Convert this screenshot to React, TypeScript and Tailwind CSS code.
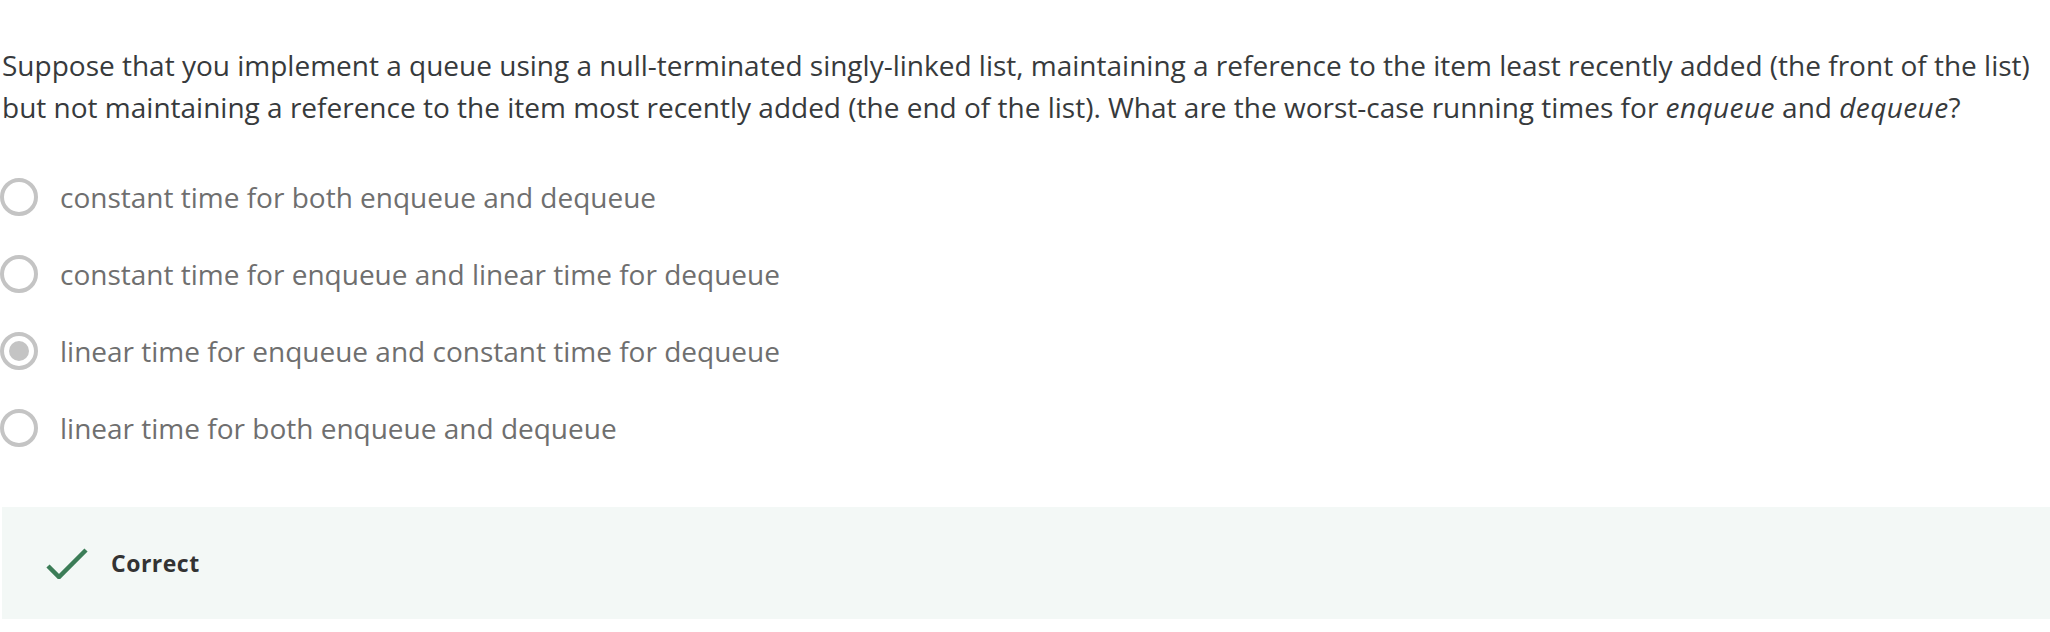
const options = [
  "constant time for both enqueue and dequeue",
  "constant time for enqueue and linear time for dequeue",
  "linear time for enqueue and constant time for dequeue",
  "linear time for both enqueue and dequeue",
];

const Radio = ({ checked }: { checked: boolean }) => (
  <span className="flex items-center justify-center w-[38px] h-[38px] rounded-full border-[4px] border-[#c4c4c4] shrink-0">
    {checked && <span className="w-[20px] h-[20px] rounded-full bg-[#c4c4c4]" />}
  </span>
);

export default function App() {
  return (
    <div className="bg-white w-[2050px] h-[632px] font-['Open_Sans',sans-serif] overflow-hidden">
      <p className="pt-[44px] pl-[2px] text-[28px] leading-[42px] text-[#373a3c]">
        Suppose that you implement a queue using a null-terminated singly-linked list, maintaining a reference to the item least recently added (the front of the list) but not maintaining a reference to the item most recently added (the end of the list). What are the worst-case running times for <em className="tracking-[0.4px]">enqueue</em> and <em className="tracking-[0.4px]">dequeue</em>?
      </p>
      <div className="mt-[30px] flex flex-col">
        {options.map((o, i) => (
          <label key={o} className="flex items-center gap-[22px] h-[77px]">
            <Radio checked={i === 2} />
            <span className="text-[28px] text-[#6f6f6f]">{o}</span>
          </label>
        ))}
      </div>
      <div className="mt-[41px] ml-[2px] h-[112px] bg-[#f3f8f6] flex items-center pl-[44px] gap-[23px]">
        <svg width="42" height="32" viewBox="0 0 42 32" fill="none">
          <path d="M2 19 L13 30 L40 3" stroke="#3b7d57" strokeWidth="4.5" />
        </svg>
        <span className="text-[23px] font-bold text-[#333] tracking-[0.5px]">Correct</span>
      </div>
    </div>
  );
}
